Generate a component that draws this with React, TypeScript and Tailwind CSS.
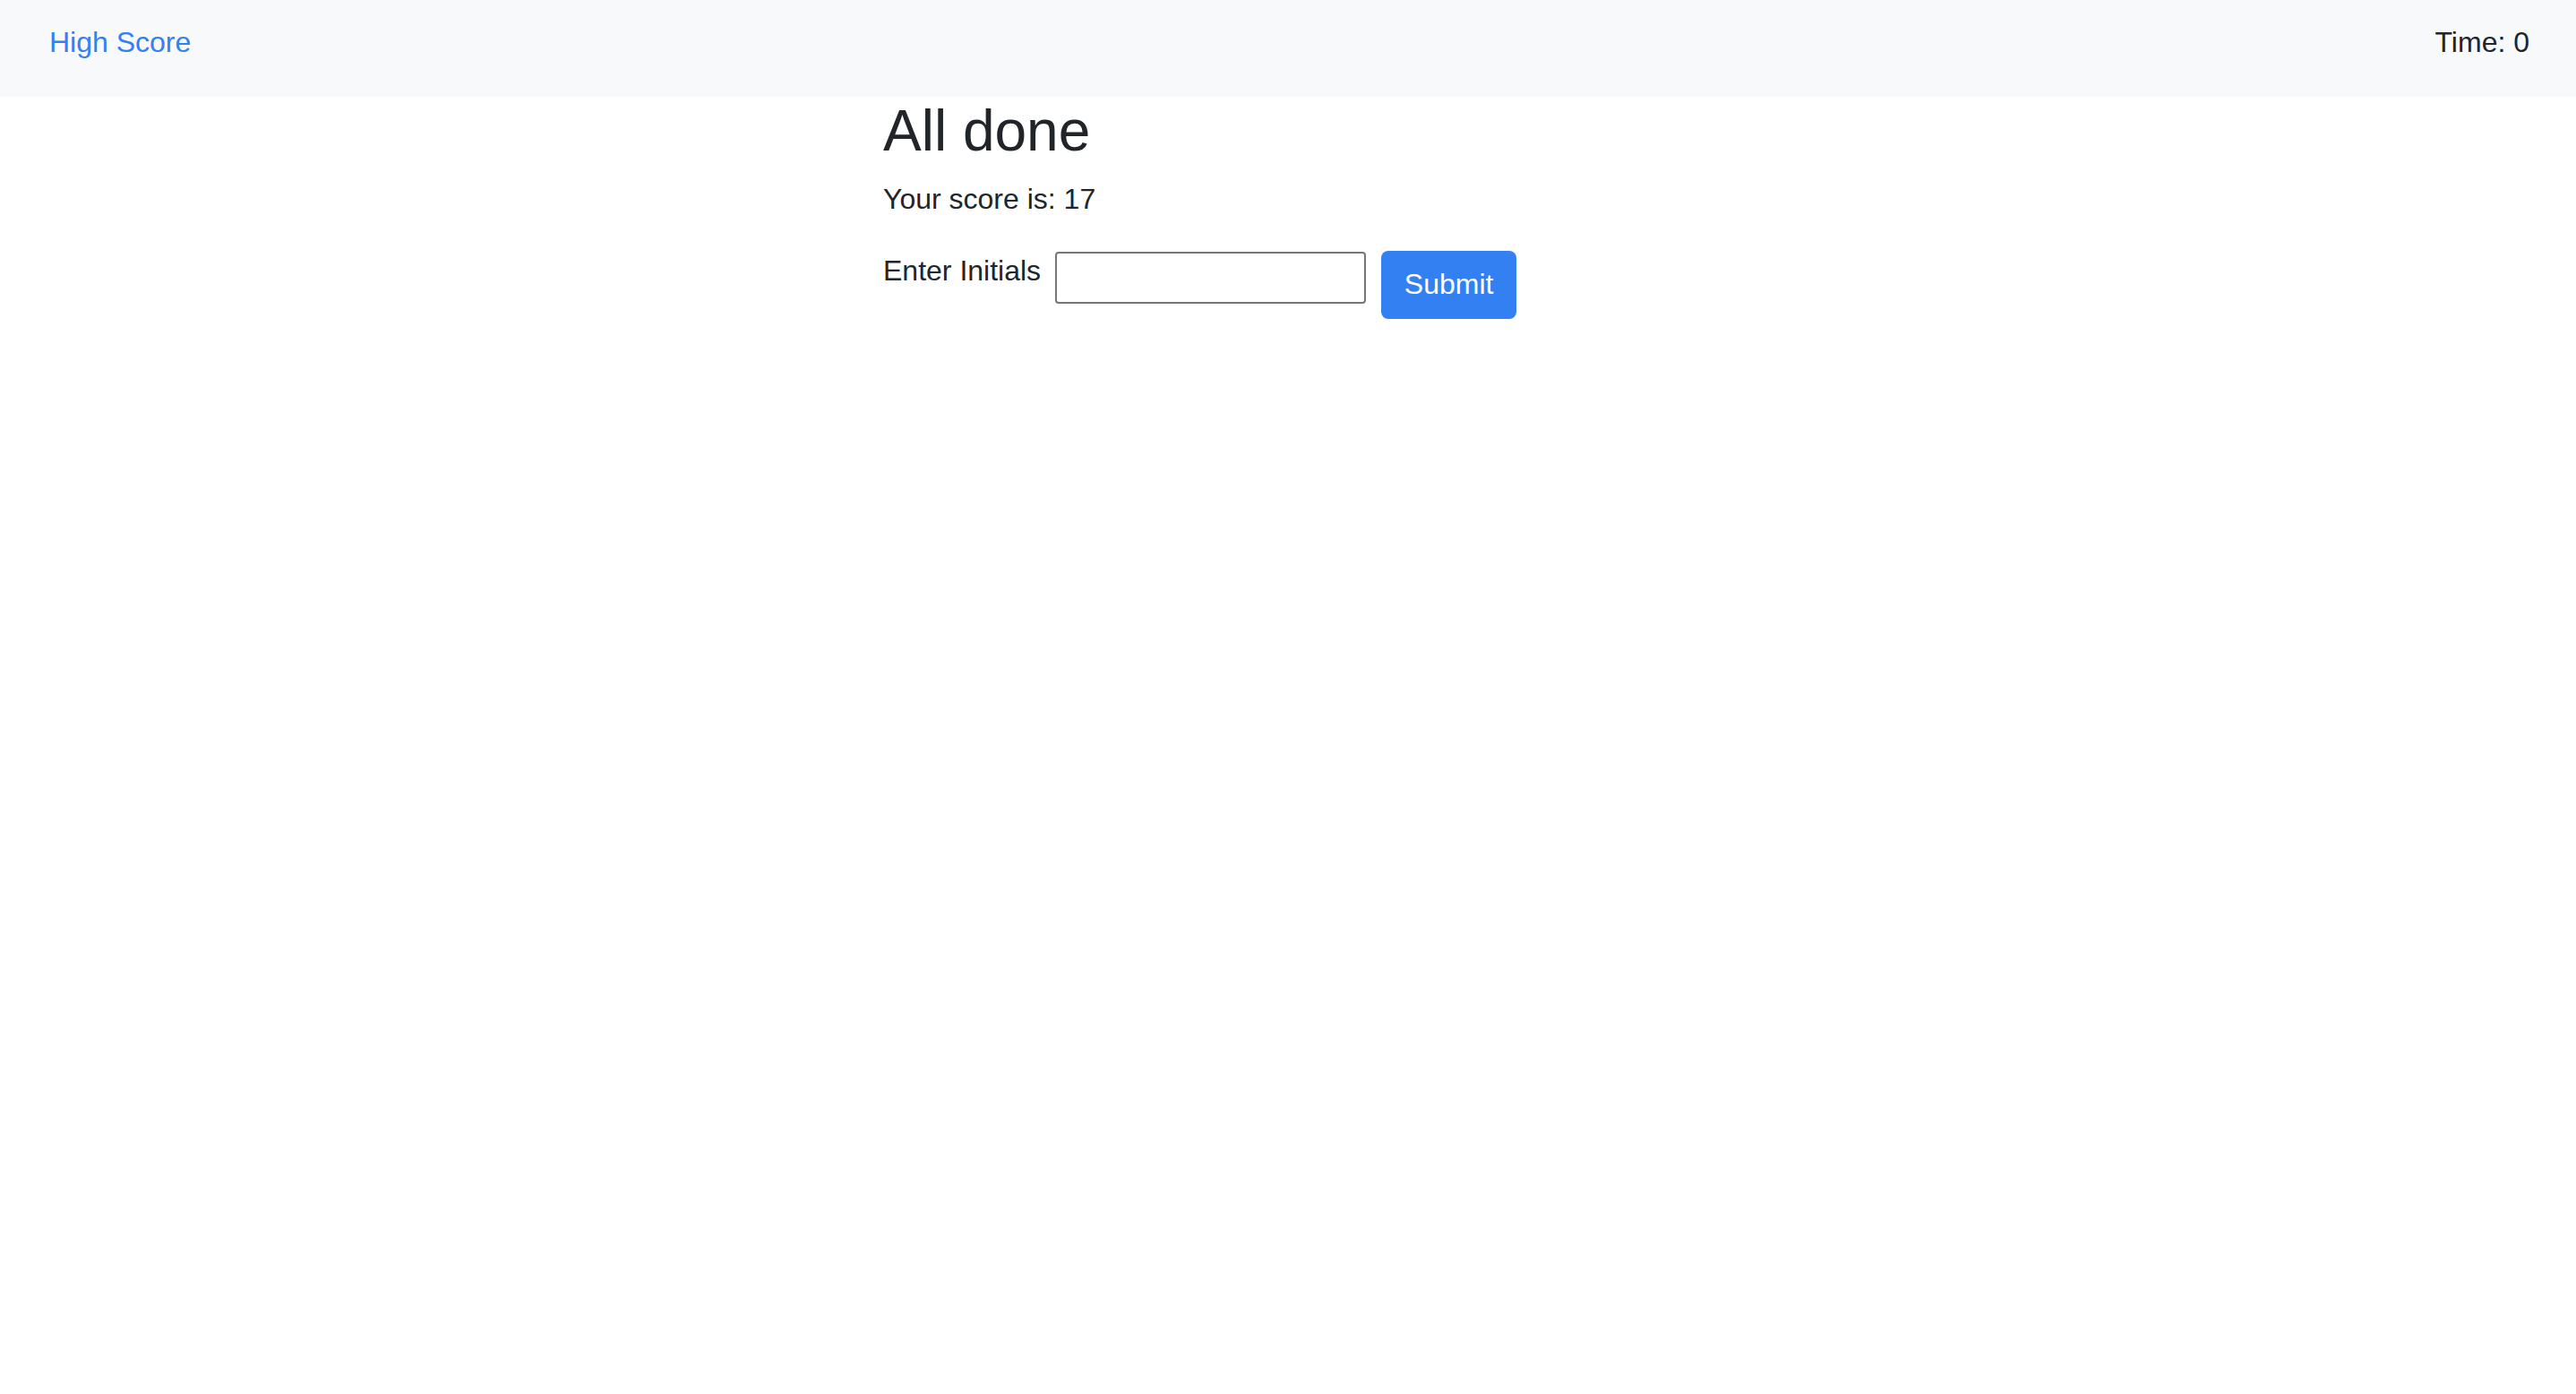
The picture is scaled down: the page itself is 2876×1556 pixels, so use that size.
import React, { useState } from 'react';

const App = () => {
  const [initials, setInitials] = useState('');

  return (
    <div className="min-h-screen bg-white text-[#212529] font-['Liberation_Sans',Arial,sans-serif]">
      {/* Navbar */}
      <nav className="h-[108px] bg-[#f8f9fa] flex items-start justify-between pt-[23px] pl-[55px] pr-[52px]">
        <a href="#" className="text-[32px] leading-[48px] text-[#3380f3]">
          High Score
        </a>
        <span className="text-[32px] leading-[48px] text-[#212529]">Time: 0</span>
      </nav>

      {/* Result */}
      <div className="mx-auto w-[904px]">
        <h1 className="text-[64px] leading-[77px] mb-[13px]">All done</h1>
        <p className="text-[32px] leading-[48px] mb-[32px]">Your score is: 17</p>
        <div className="flex items-start">
          <label className="text-[32px] leading-[48px] mr-[16px]">Enter Initials</label>
          <input
            value={initials}
            onChange={(e) => setInitials(e.target.value)}
            className="mt-[3px] w-[347px] h-[58px] border-2 border-[#767676] rounded-[4px] px-2 text-[26px] outline-none"
          />
          <button className="ml-[17px] mt-[2px] w-[151px] h-[76px] pb-[2px] rounded-[8px] bg-[#3380f3] text-white text-[32px] leading-[48px]">
            Submit
          </button>
        </div>
      </div>
    </div>
  );
};

export default App;
